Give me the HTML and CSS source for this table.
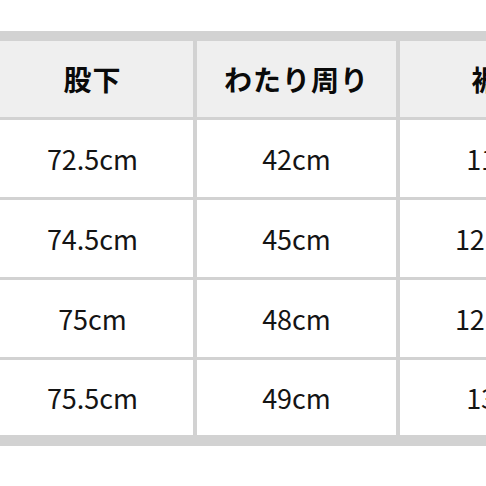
FILE: index.html
```html
<!DOCTYPE html>
<html lang="ja">
<head>
<meta charset="utf-8">
<link rel="stylesheet" href="styles.css">
</head>
<body>
<div class="page">
  <div class="table">
    <div class="cell head">股下</div>
    <div class="cell head">わたり周り</div>
    <div class="cell head">裾幅</div>
    <div class="cell">72.5cm</div>
    <div class="cell">42cm</div>
    <div class="cell">11cm</div>
    <div class="cell">74.5cm</div>
    <div class="cell">45cm</div>
    <div class="cell">12.5cm</div>
    <div class="cell">75cm</div>
    <div class="cell">48cm</div>
    <div class="cell">12.5cm</div>
    <div class="cell">75.5cm</div>
    <div class="cell">49cm</div>
    <div class="cell">13cm</div>
  </div>
</div>
</body>
</html>
```
FILE: styles.css
```css
html, body {
  margin: 0;
  padding: 0;
  background: #fff;
}
.page {
  width: 486px;
  height: 486px;
  overflow: hidden;
  padding-top: 31px;
  box-sizing: border-box;
}
.table {
  display: grid;
  grid-template-columns: 201px 199px 201px;
  grid-template-rows: 76px 77px 77px 77px 75px;
  column-gap: 4px;
  row-gap: 3px;
  background: #d2d2d2;
  padding: 10px 0 11px 0;
  margin-left: -8px;
  width: 609px;
  font-family: "Noto Sans CJK JP", "Noto Sans", sans-serif;
  color: #141414;
}
.cell {
  background: #fff;
  display: flex;
  align-items: center;
  justify-content: center;
  font-size: 27px;
  font-weight: 400;
}
.head {
  background: #efefef;
  font-size: 28px;
  font-weight: 700;
  letter-spacing: 1px;
  color: #0a0a0a;
}
```
